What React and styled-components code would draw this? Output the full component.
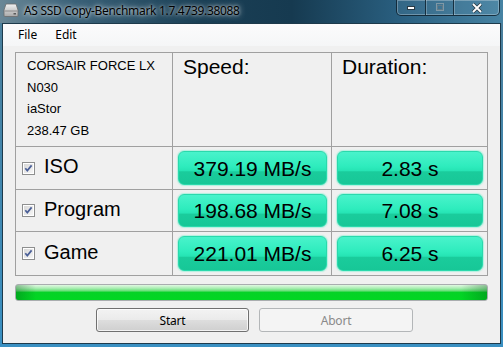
import React from 'react';
import styled, { createGlobalStyle } from 'styled-components';

const Global = createGlobalStyle`
  html, body { margin: 0; padding: 0; }
  body { width: 503px; height: 347px; overflow: hidden; background: #3f86b3; }
`;

const Window = styled.div`
  width: 503px;
  height: 347px;
  box-sizing: border-box;
  display: flex;
  flex-direction: column;
  background:
    linear-gradient(180deg, rgba(0,0,0,0) 23px, #4a7f9c 23px, #3a90c2 347px),
    linear-gradient(90deg, #6a8796 0%, #3b6279 14%, #1a3f55 40%, #163a50 58%, #2a6081 80%, #4683a3 100%);
  font-family: "Liberation Sans", Arial, sans-serif;
`;

const TitleBar = styled.div`
  height: 23px;
  flex: none;
  display: flex;
  align-items: flex-start;
  padding-left: 3px;
`;

const AppIcon = styled.svg`
  margin-top: 3px;
  flex: none;
`;

const TitleText = styled.div`
  margin-left: 5px;
  margin-top: 3px;
  font-family: "Noto Sans", "Open Sans", sans-serif;
  font-size: 12px;
  line-height: 16px;
  color: #000;
  text-shadow: 0 0 6px rgba(255,255,255,0.85), 0 0 3px rgba(255,255,255,0.6);
  letter-spacing: -0.32px;
`;

const Caption = styled.div`
  margin-left: auto;
  margin-right: 3px;
  display: flex;
  height: 16px;
  box-sizing: border-box;
  border: 1px solid rgba(15, 35, 48, 0.85);
  border-top: none;
  border-radius: 0 0 5px 5px;
  box-shadow: inset 0 0 0 1px rgba(255,255,255,0.28);
  overflow: hidden;
`;

const CapBtn = styled.div`
  width: ${p => p.$w}px;
  height: 100%;
  display: flex;
  align-items: center;
  justify-content: center;
  background: rgba(255,255,255,0.05);
  & + & { border-left: 1px solid rgba(15, 35, 48, 0.85); box-shadow: inset 1px 0 0 rgba(255,255,255,0.25); }
`;

const Client = styled.div`
  flex: 1;
  margin: 0 2px 3px 2px;
  border: 1px solid #1d3a4b;
  background: #f0f0f0;
  display: flex;
  flex-direction: column;
`;

const MenuBar = styled.div`
  height: 22px;
  display: flex;
  padding-left: 6px;
  background: linear-gradient(180deg, #fbfbfc 0%, #f5f6f7 100%);
`;

const MenuItem = styled.div`
  padding: 0 9px;
  font-family: "Noto Sans", "Open Sans", sans-serif;
  font-size: 12px;
  line-height: 22px;
  color: #000;
`;

const Body = styled.div`
  padding: 6px 12px 0 12px;
  display: flex;
  flex-direction: column;
`;

const Table = styled.div`
  display: grid;
  grid-template-columns: 156px 158px 155px;
  grid-template-rows: 93px 42px 41px 43px;
  gap: 1px;
  background: #a0a0a0;
  border: 1px solid #a0a0a0;
  width: max-content;
`;

const Cell = styled.div`
  background: #f0f0f0;
  box-sizing: border-box;
`;

const InfoCell = styled(Cell)`
  padding: 2px 0 0 11px;
  font-size: 13px;
  line-height: 21.5px;
  color: #000;
`;

const HeadCell = styled(Cell)`
  padding: 2px 0 0 10px;
  font-size: 21px;
  line-height: 24px;
  color: #000;
`;

const LabelCell = styled(Cell)`
  display: flex;
  align-items: center;
  padding-left: 6px;
  gap: 9px;
  font-size: 20px;
  color: #000;
`;

const LabelText = styled.span`
  margin-top: -3px;
`;

const ValueCell = styled(Cell)`
  display: flex;
  padding: 4px 4px 4px 5px;
`;

const ValueBox = styled.div`
  flex: 1;
  display: flex;
  align-items: center;
  justify-content: center;
  border-radius: 6px;
  border: 1px solid #2ad9ac;
  box-shadow: 0 0 1px 1px rgba(150, 240, 215, 0.7);
  background: linear-gradient(180deg, #49f3cb 0%, #2eecbd 45%, #26e4b4 58%, #1acc9c 62%, #17c797 100%);
  font-size: 21px;
  color: #000;
  padding-top: 1px;
`;

const Progress = styled.div`
  margin-top: 8px;
  width: 473px;
  height: 17px;
  box-sizing: border-box;
  border: 1px solid #a9adaf;
  border-radius: 3px;
  background:
    linear-gradient(90deg, rgba(0,90,20,0.35) 0px, rgba(0,90,20,0) 20px, rgba(0,90,20,0) 445px, rgba(0,90,20,0.35) 471px),
    linear-gradient(180deg, #e2f8e3 0%, #a8eeb1 22%, #63de74 40%, #05d227 48%, #00d723 100%);
`;

const ButtonRow = styled.div`
  margin-top: 7px;
  padding-left: 81px;
  display: flex;
  gap: 10px;
`;

const Button = styled.div`
  width: ${p => p.$w}px;
  height: 24px;
  box-sizing: border-box;
  border-radius: 3px;
  display: flex;
  align-items: center;
  justify-content: center;
  font-family: "Noto Sans", "Open Sans", sans-serif;
  font-size: 12px;
  letter-spacing: -0.2px;
  border: 1px solid ${p => (p.$disabled ? '#b3b6b8' : '#707070')};
  color: ${p => (p.$disabled ? '#8a8a8a' : '#000')};
  background: ${p => (p.$disabled
    ? '#f4f4f4'
    : 'linear-gradient(180deg, #f3f3f3 0%, #ebebeb 48%, #dddddd 52%, #cfcfcf 100%)')};
  box-shadow: ${p => (p.$disabled ? 'none' : 'inset 0 0 0 1px rgba(255,255,255,0.75)')};
`;

function CheckBox() {
  return (
    <svg width="13" height="13" viewBox="0 0 13 13">
      <rect x="0.5" y="0.5" width="12" height="12" fill="#fff" stroke="#8e8f8f" />
      <rect x="2" y="2" width="9" height="9" fill="url(#cbg)" />
      <defs>
        <linearGradient id="cbg" x1="0" y1="0" x2="1" y2="1">
          <stop offset="0" stopColor="#d8d8d8" />
          <stop offset="1" stopColor="#f6f6f6" />
        </linearGradient>
      </defs>
      <path d="M3.3 6.3 L5.3 8.6 L9.6 3.4" fill="none" stroke="#4a5f97" strokeWidth="1.7" />
    </svg>
  );
}

const rows = [
  { label: 'ISO', speed: '379.19 MB/s', dur: '2.83 s' },
  { label: 'Program', speed: '198.68 MB/s', dur: '7.08 s' },
  { label: 'Game', speed: '221.01 MB/s', dur: '6.25 s' },
];

export default function App() {
  return (
    <>
      <Global />
      <Window>
        <TitleBar>
          <AppIcon width="16" height="14" viewBox="0 0 16 14">
            <defs>
              <linearGradient id="drv" x1="0" y1="0" x2="0" y2="1">
                <stop offset="0" stopColor="#f2f2f2" />
                <stop offset="1" stopColor="#a8a8a8" />
              </linearGradient>
            </defs>
            <path d="M3 1 H13 L15 7 V12.5 Q15 13.5 14 13.5 H2 Q1 13.5 1 12.5 V7 Z" fill="url(#drv)" stroke="#6c6c6c" strokeWidth="0.8" />
            <path d="M1.5 8 H14.5" stroke="#7a7a7a" strokeWidth="0.8" />
            <rect x="10.5" y="10" width="2.5" height="1.5" fill="#5a5a5a" />
          </AppIcon>
          <TitleText>AS SSD Copy-Benchmark 1.7.4739.38088</TitleText>
          <Caption>
            <CapBtn $w={28}>
              <svg width="10" height="6" viewBox="0 0 10 6">
                <rect x="1.5" y="1.5" width="7" height="3" fill="#fff" stroke="#2a3a44" strokeWidth="1" />
              </svg>
            </CapBtn>
            <CapBtn $w={27}>
              <svg width="10" height="9" viewBox="0 0 10 9">
                <rect x="1.5" y="0.5" width="7" height="7" fill="none" stroke="#7f98a6" strokeWidth="1" />
                <rect x="2.5" y="2.5" width="5" height="4" fill="none" stroke="#5f7a89" strokeWidth="1" />
              </svg>
            </CapBtn>
            <CapBtn $w={45}>
              <svg width="12" height="10" viewBox="0 0 12 10">
                <path d="M2 1 L10 9 M10 1 L2 9" stroke="#2a3a44" strokeWidth="3.4" />
                <path d="M2 1 L10 9 M10 1 L2 9" stroke="#fff" strokeWidth="1.8" />
              </svg>
            </CapBtn>
          </Caption>
        </TitleBar>
        <Client>
          <MenuBar>
            <MenuItem>File</MenuItem>
            <MenuItem>Edit</MenuItem>
          </MenuBar>
          <Body>
            <Table>
              <InfoCell>
                <div>CORSAIR FORCE LX</div>
                <div>N030</div>
                <div>iaStor</div>
                <div>238.47 GB</div>
              </InfoCell>
              <HeadCell>Speed:</HeadCell>
              <HeadCell>Duration:</HeadCell>
              {rows.map(r => (
                <React.Fragment key={r.label}>
                  <LabelCell>
                    <CheckBox />
                    <LabelText>{r.label}</LabelText>
                  </LabelCell>
                  <ValueCell><ValueBox>{r.speed}</ValueBox></ValueCell>
                  <ValueCell><ValueBox>{r.dur}</ValueBox></ValueCell>
                </React.Fragment>
              ))}
            </Table>
            <Progress />
            <ButtonRow>
              <Button $w={153}>Start</Button>
              <Button $w={154} $disabled>Abort</Button>
            </ButtonRow>
          </Body>
        </Client>
      </Window>
    </>
  );
}
